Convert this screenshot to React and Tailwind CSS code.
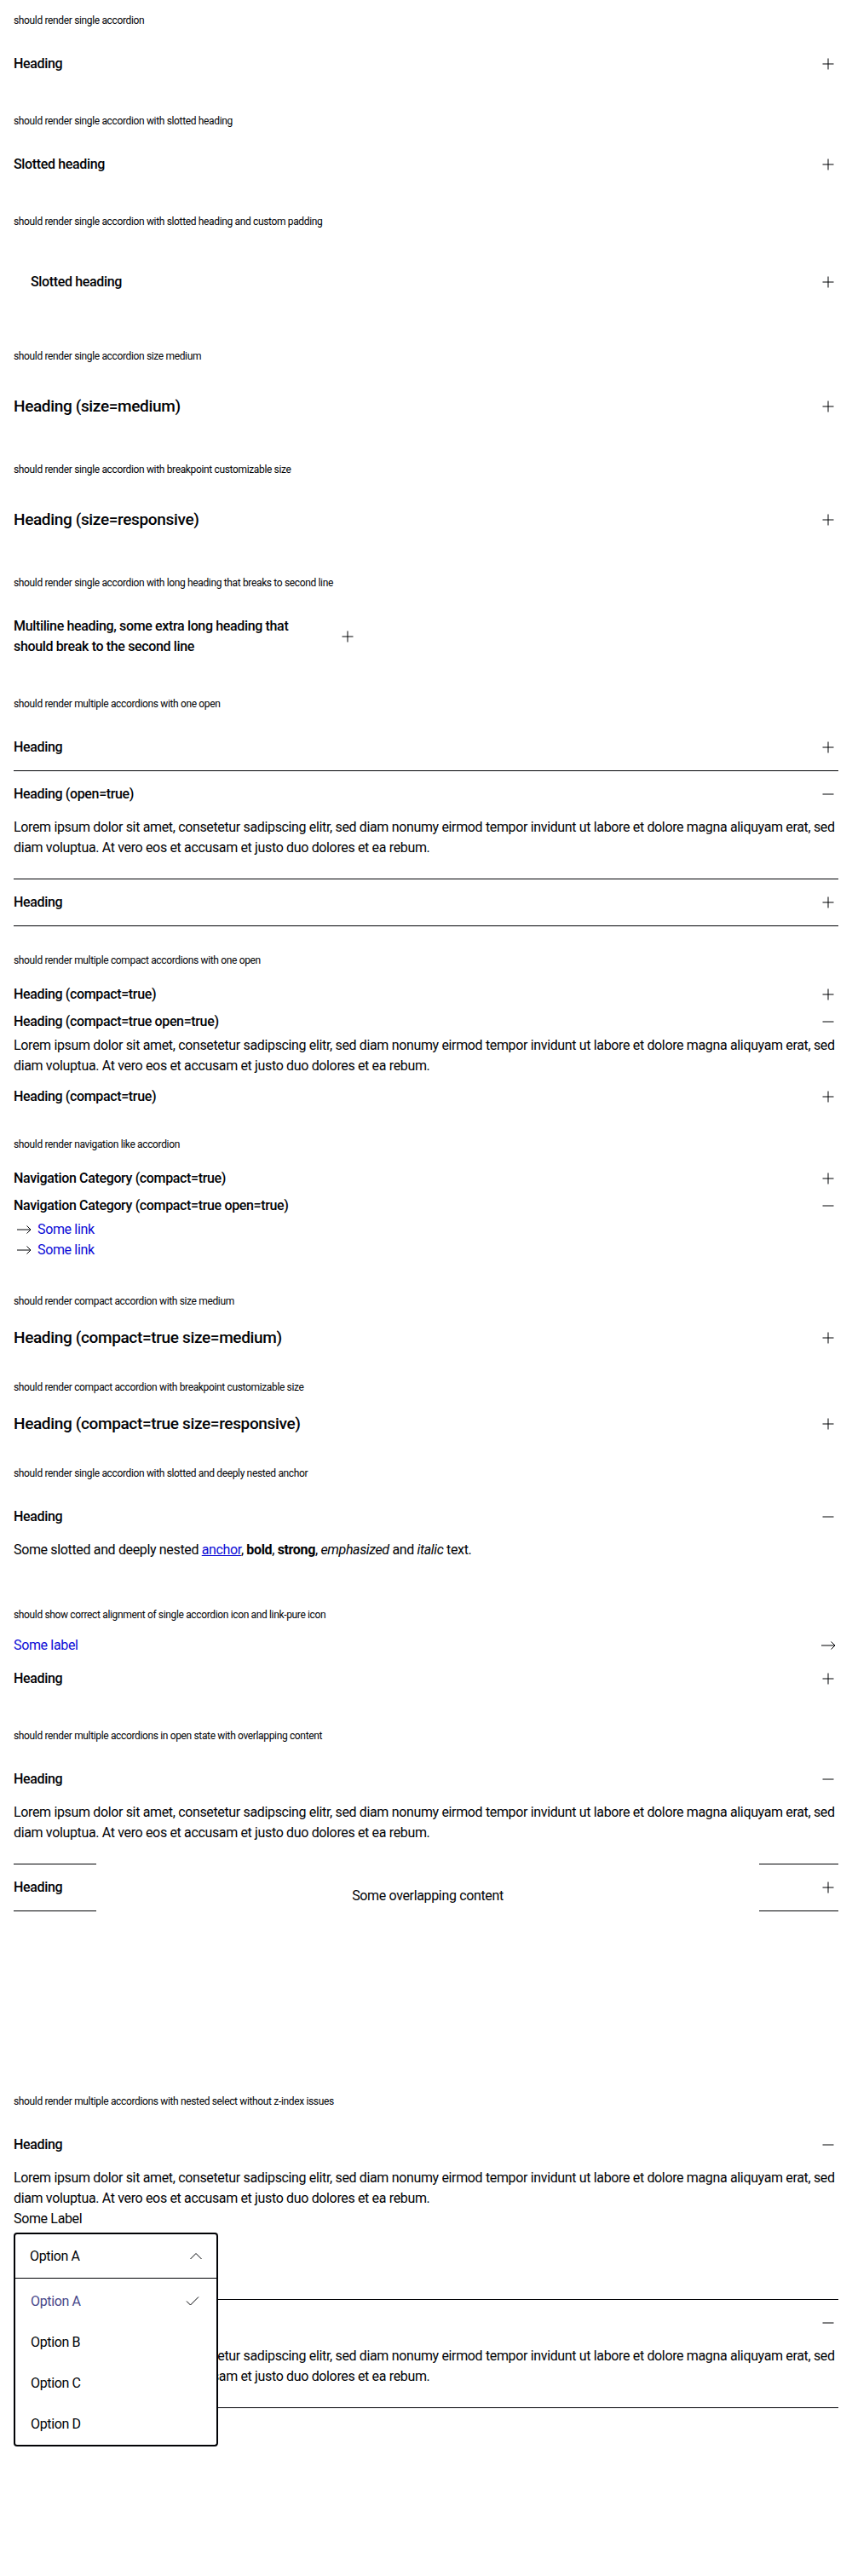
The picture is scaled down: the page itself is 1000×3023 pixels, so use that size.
import React from "react";

const LOREM =
  "Lorem ipsum dolor sit amet, consetetur sadipscing elitr, sed diam nonumy eirmod tempor invidunt ut labore et dolore magna aliquyam erat, sed diam voluptua. At vero eos et accusam et justo duo dolores et ea rebum.";

function PlusIcon() {
  return (
    <svg width="24" height="24" viewBox="0 0 24 24" fill="none" stroke="currentColor" strokeWidth="1" className="shrink-0">
      <path d="M12 5.5v13M5.5 12h13" />
    </svg>
  );
}

function MinusIcon() {
  return (
    <svg width="24" height="24" viewBox="0 0 24 24" fill="none" stroke="currentColor" strokeWidth="1" className="shrink-0">
      <path d="M5.5 12h13" />
    </svg>
  );
}

function ArrowIcon() {
  return (
    <svg width="24" height="24" viewBox="0 0 24 24" fill="none" stroke="currentColor" strokeWidth="1" className="shrink-0">
      <path d="M4 12h16M15.5 7.5 20 12l-4.5 4.5" />
    </svg>
  );
}

function ChevronUpIcon() {
  return (
    <svg width="24" height="24" viewBox="0 0 24 24" fill="none" stroke="currentColor" strokeWidth="1" className="shrink-0">
      <path d="M5.5 15 12 8.5l6.5 6.5" />
    </svg>
  );
}

function CheckIcon() {
  return (
    <svg width="24" height="24" viewBox="0 0 24 24" fill="none" stroke="currentColor" strokeWidth="1" className="shrink-0">
      <path d="M5 11.5l4.5 4.5L19 6.5" />
    </svg>
  );
}

function Section({ title, className, children }) {
  return (
    <div className={"px-4 py-4 " + (className || "")}>
      <p className="mb-4 text-[12px] leading-4">{title}</p>
      {children}
    </div>
  );
}

function Accordion({ heading, open, size, compact, border, pad, children }) {
  const medium = size === "medium";
  const textCls = medium ? "text-[19px] leading-[29px]" : "text-[16px] leading-6";
  let headerCls;
  if (pad) headerCls = "pt-[35px] pb-[35px] pl-5";
  else if (medium) headerCls = compact ? "py-1" : "py-5";
  else headerCls = compact ? "py-1" : "py-[15px]";
  return (
    <div className={border ? "border-b border-[#010205]" : ""}>
      <div className={"flex items-center justify-between gap-6 " + headerCls}>
        <span className={"font-medium " + textCls}>{heading}</span>
        {open ? <MinusIcon /> : <PlusIcon />}
      </div>
      {open && (
        <div className={"text-[16px] leading-6 " + (compact ? "pb-2" : "pb-6")}>{children}</div>
      )}
    </div>
  );
}

function NavLink() {
  return (
    <div className="flex h-6 items-center gap-1">
      <ArrowIcon />
      <a className="text-[#0b0bd6]">Some link</a>
    </div>
  );
}

function Select() {
  const options = ["Option A", "Option B", "Option C", "Option D"];
  return (
    <div className="relative mt-1 w-[240px]">
      <div className="flex h-[54px] items-center justify-between rounded-t-[4px] border-x-2 border-t-2 border-b border-[#010205] pl-[17px] pr-3">
        <span>Option A</span>
        <ChevronUpIcon />
      </div>
      <div className="absolute left-0 top-full z-10 w-full rounded-b-[4px] border-x-2 border-b-2 border-[#010205] bg-white pt-[3px]">
        {options.map((o, i) => (
          <div key={o} className="flex h-12 items-center justify-between pl-[18px] pr-4">
            <span className={i === 0 ? "text-[#48478a]" : ""}>{o}</span>
            {i === 0 && <CheckIcon />}
          </div>
        ))}
      </div>
    </div>
  );
}

export default function App() {
  return (
    <div className="min-h-[3023px] bg-white font-['Roboto',sans-serif] text-[#010205] tracking-[-0.35px]">
      <Section title="should render single accordion">
        <Accordion heading="Heading" />
      </Section>

      <Section title="should render single accordion with slotted heading">
        <Accordion heading="Slotted heading" />
      </Section>

      <Section title="should render single accordion with slotted heading and custom padding">
        <Accordion heading="Slotted heading" pad />
      </Section>

      <Section title="should render single accordion size medium">
        <Accordion heading="Heading (size=medium)" size="medium" />
      </Section>

      <Section title="should render single accordion with breakpoint customizable size">
        <Accordion heading="Heading (size=responsive)" size="medium" />
      </Section>

      <Section title="should render single accordion with long heading that breaks to second line">
        <div className="w-[404px]">
          <Accordion
            heading={
              <>
                Multiline heading, some extra long heading that
                <br />
                should break to the second line
              </>
            }
          />
        </div>
      </Section>

      <Section title="should render multiple accordions with one open">
        <Accordion heading="Heading" border />
        <Accordion heading="Heading (open=true)" open border>
          {LOREM}
        </Accordion>
        <Accordion heading="Heading" border />
      </Section>

      <Section title="should render multiple compact accordions with one open">
        <Accordion heading="Heading (compact=true)" compact />
        <Accordion heading="Heading (compact=true open=true)" compact open>
          {LOREM}
        </Accordion>
        <Accordion heading="Heading (compact=true)" compact />
      </Section>

      <Section title="should render navigation like accordion">
        <Accordion heading="Navigation Category (compact=true)" compact />
        <Accordion heading="Navigation Category (compact=true open=true)" compact open>
          <NavLink />
          <NavLink />
        </Accordion>
      </Section>

      <Section title="should render compact accordion with size medium">
        <Accordion heading="Heading (compact=true size=medium)" size="medium" compact />
      </Section>

      <Section title="should render compact accordion with breakpoint customizable size">
        <Accordion heading="Heading (compact=true size=responsive)" size="medium" compact />
      </Section>

      <Section title="should render single accordion with slotted and deeply nested anchor">
        <Accordion heading="Heading" open>
          <p>
            Some slotted and deeply nested{" "}
            <a className="text-[#0b0bd6] underline">anchor</a>, <b className="font-bold">bold</b>,{" "}
            <strong className="font-bold">strong</strong>, <em className="italic">emphasized</em> and{" "}
            <i className="italic">italic</i> text.
          </p>
        </Accordion>
      </Section>

      <Section title="should show correct alignment of single accordion icon and link-pure icon">
        <div className="flex h-6 items-center justify-between">
          <a className="text-[16px] leading-6 text-[#0b0bd6]">Some label</a>
          <ArrowIcon />
        </div>
        <Accordion heading="Heading" />
      </Section>

      <Section title="should render multiple accordions in open state with overlapping content" className="h-[429px]">
        <div className="relative">
          <Accordion heading="Heading" open border>
            {LOREM}
          </Accordion>
          <Accordion heading="Heading" border />
          <div className="absolute left-[97px] top-[110px] z-10 flex h-[108px] w-[778px] items-center justify-center bg-white text-[16px]">
            Some overlapping content
          </div>
        </div>
      </Section>

      <Section title="should render multiple accordions with nested select without z-index issues">
        <Accordion heading="Heading" open border>
          <p>{LOREM}</p>
          <p>Some Label</p>
          <Select />
        </Accordion>
        <Accordion heading="Heading" open border>
          {LOREM}
        </Accordion>
      </Section>
    </div>
  );
}
